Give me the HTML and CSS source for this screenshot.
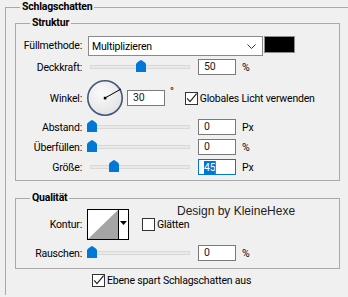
FILE: index.html
```html
<!DOCTYPE html>
<html lang="de">
<head>
<meta charset="utf-8">
<link rel="stylesheet" href="styles.css">
</head>
<body>
<fieldset class="outer">
  <legend>Schlagschatten</legend>

  <fieldset class="group struktur">
    <legend>Struktur</legend>

    <div class="row row-mode">
      <span class="label">Füllmethode:</span>
      <div class="select">
        <span class="select-text">Multiplizieren</span>
        <svg class="chev" width="9" height="5" viewBox="0 0 9 5"><path d="M0.5 0.5 L4.5 4.5 L8.5 0.5" fill="none" stroke="#333" stroke-width="1"/></svg>
      </div>
      <div class="swatch"></div>
    </div>

    <div class="row row-slider row-opacity">
      <span class="label">Deckkraft:</span>
      <div class="slider">
        <div class="track"></div>
        <svg class="thumb" style="left:49px" width="10" height="12" viewBox="0 0 10 12"><path d="M0 12 V4.5 Q0 3.2 1.2 2.4 L4 0.4 Q5 -0.2 6 0.4 L8.8 2.4 Q10 3.2 10 4.5 V12 Z" fill="#0078d7"/></svg>
      </div>
      <div class="num">50</div>
      <span class="unit">%</span>
    </div>

    <div class="row row-angle">
      <span class="label">Winkel:</span>
      <svg class="dial" width="38" height="38" viewBox="0 0 38 38">
        <defs>
          <radialGradient id="dg" cx="0.4" cy="0.35" r="0.7">
            <stop offset="0" stop-color="#fbfbfb"/>
            <stop offset="1" stop-color="#e2e2e2"/>
          </radialGradient>
        </defs>
        <circle cx="19" cy="19" r="17.2" fill="url(#dg)" stroke="#46557a" stroke-width="1.6"/>
        <line x1="19" y1="19" x2="35" y2="10" stroke="#000" stroke-width="1"/>
        <rect x="17.8" y="17.8" width="2.6" height="2.6" fill="#000"/>
      </svg>
      <div class="num num-angle">30</div>
      <span class="unit unit-deg">°</span>
      <div class="check check-global">
        <svg class="box" width="13" height="13" viewBox="0 0 13 13"><rect x="0.5" y="0.5" width="12" height="12" fill="#fff" stroke="#333"/><path d="M2.2 6.4 L5 9.6 L11.6 1.6" fill="none" stroke="#222" stroke-width="1.2"/></svg>
        <span>Globales Licht verwenden</span>
      </div>
    </div>

    <div class="row row-slider row-dist">
      <span class="label">Abstand:</span>
      <div class="slider">
        <div class="track"></div>
        <svg class="thumb" style="left:0px" width="10" height="12" viewBox="0 0 10 12"><path d="M0 12 V4.5 Q0 3.2 1.2 2.4 L4 0.4 Q5 -0.2 6 0.4 L8.8 2.4 Q10 3.2 10 4.5 V12 Z" fill="#0078d7"/></svg>
      </div>
      <div class="num">0</div>
      <span class="unit">Px</span>
    </div>

    <div class="row row-slider row-spread">
      <span class="label">Überfüllen:</span>
      <div class="slider">
        <div class="track"></div>
        <svg class="thumb" style="left:0px" width="10" height="12" viewBox="0 0 10 12"><path d="M0 12 V4.5 Q0 3.2 1.2 2.4 L4 0.4 Q5 -0.2 6 0.4 L8.8 2.4 Q10 3.2 10 4.5 V12 Z" fill="#0078d7"/></svg>
      </div>
      <div class="num">0</div>
      <span class="unit">%</span>
    </div>

    <div class="row row-slider row-size">
      <span class="label">Größe:</span>
      <div class="slider">
        <div class="track"></div>
        <svg class="thumb" style="left:22px" width="10" height="12" viewBox="0 0 10 12"><path d="M0 12 V4.5 Q0 3.2 1.2 2.4 L4 0.4 Q5 -0.2 6 0.4 L8.8 2.4 Q10 3.2 10 4.5 V12 Z" fill="#0078d7"/></svg>
      </div>
      <div class="num num-focus"><span class="sel">45</span><span class="caret"></span></div>
      <span class="unit">Px</span>
    </div>
  </fieldset>

  <fieldset class="group qual">
    <legend>Qualität</legend>

    <div class="row row-contour">
      <span class="label">Kontur:</span>
      <div class="contour">
        <svg class="preview" width="30" height="29" viewBox="0 0 30 29"><rect x="0" y="0" width="30" height="29" fill="#fff"/><path d="M0 29 L30 0 V29 Z" fill="#a5a5a5"/></svg>
        <div class="drop"><svg width="7" height="4" viewBox="0 0 7 4"><path d="M0 0 H7 L3.5 4 Z" fill="#000"/></svg></div>
      </div>
      <div class="check check-smooth">
        <svg class="box" width="13" height="13" viewBox="0 0 13 13"><rect x="0.5" y="0.5" width="12" height="12" fill="#fff" stroke="#333"/></svg>
        <span>Glätten</span>
      </div>
      <span class="watermark">Design by KleineHexe</span>
    </div>

    <div class="row row-slider row-noise">
      <span class="label">Rauschen:</span>
      <div class="slider">
        <div class="track"></div>
        <svg class="thumb" style="left:0px" width="10" height="12" viewBox="0 0 10 12"><path d="M0 12 V4.5 Q0 3.2 1.2 2.4 L4 0.4 Q5 -0.2 6 0.4 L8.8 2.4 Q10 3.2 10 4.5 V12 Z" fill="#0078d7"/></svg>
      </div>
      <div class="num">0</div>
      <span class="unit">%</span>
    </div>
  </fieldset>

  <div class="check check-knockout">
    <svg class="box" width="13" height="13" viewBox="0 0 13 13"><rect x="0.5" y="0.5" width="12" height="12" fill="#fff" stroke="#333"/><path d="M2.2 6.4 L5 9.6 L11.6 1.6" fill="none" stroke="#222" stroke-width="1.2"/></svg>
    <span>Ebene spart Schlagschatten aus</span>
  </div>
</fieldset>
</body>
</html>
```

FILE: styles.css
```css
* { box-sizing: border-box; }
html, body { margin: 0; padding: 0; }
body {
  width: 348px;
  height: 297px;
  overflow: hidden;
  background: #f0f0f0;
  font-family: Roboto, "Liberation Sans", sans-serif;
  font-size: 10.5px;
  letter-spacing: -0.2px;
  color: #000;
}
fieldset {
  border: 1px solid #a9a9a9;
  margin: 0;
  padding: 0;
  min-width: 0;
}
legend {
  padding: 0 2px;
  font-weight: bold;
  font-size: 10.5px;
  line-height: 14px;
  height: 14px;
  margin-left: 14px;
  color: #000;
}
.outer {
  margin-left: 5px;
  width: 343px;
  border-right: 0;
  border-bottom: 0;
  padding-bottom: 8px;
}
.group {
  margin-left: 9px;
  width: 325px;
}
.struktur {
  margin-top: 2px;
  padding-bottom: 5px;
}
.qual {
  margin-top: 10px;
  padding-bottom: 7px;
}
.row {
  display: flex;
  align-items: center;
  position: relative;
}
.label {
  flex: none;
  width: 66px;
  text-align: right;
  white-space: nowrap;
}
.row-mode {
  margin-top: 6px;
  height: 20px;
  align-items: flex-start;
}
.row-mode .label { line-height: 20px; }
.select {
  margin-left: 6px;
  width: 175px;
  height: 20px;
  background: #fff;
  border: 1px solid #8a8a8a;
  display: flex;
  align-items: center;
  justify-content: space-between;
  padding: 0 6px 0 3px;
}
.chev { display: block; }
.swatch {
  margin-left: 1px;
  width: 31px;
  height: 17px;
  background: #000;
  border: 1px solid #8c8c8c;
}
.row-slider { height: 16px; }
.row-opacity { margin-top: 3px; }
.row-dist { margin-top: 2px; }
.row-spread { margin-top: 4px; }
.row-size { margin-top: 4px; }
.slider {
  position: relative;
  margin-left: 5px;
  width: 105px;
  height: 16px;
  flex: none;
}
.track {
  margin-left: 3px;
  margin-top: 6px;
  width: 100px;
  height: 4px;
  background: #e9e9e9;
  border: 1px solid #d8d8d8;
}
.thumb {
  position: absolute;
  top: 1px;
  display: block;
}
.num {
  flex: none;
  margin-left: 6px;
  width: 38px;
  height: 16px;
  background: #fff;
  border: 1px solid #7a7a7a;
  padding-left: 5px;
  line-height: 14px;
  color: #1a1a1a;
  display: flex;
  align-items: center;
}
.unit {
  margin-left: 6px;
  color: #000;
}
.row-angle {
  margin-top: 4px;
  height: 38px;
}
.dial {
  margin-left: 4px;
  display: block;
  flex: none;
}
.num-angle { margin-left: 3px; }
.unit-deg {
  margin-left: 5px;
  align-self: flex-start;
  margin-top: 6px;
}
.check {
  display: flex;
  align-items: center;
  white-space: nowrap;
}
.check .box { display: block; flex: none; }
.check span { margin-left: 2px; }
.check-global { margin-left: 11px; }
.num-focus {
  border-color: #0078d7;
  padding-left: 5px;
}
.sel {
  background: #0078d7;
  color: #fff;
  height: 13px;
  line-height: 13px;
}
.caret {
  width: 1px;
  height: 13px;
  background: #e05a10;
}
.row-contour {
  margin-top: 4px;
  height: 31px;
}
.contour {
  margin-left: 5px;
  width: 42px;
  height: 31px;
  border: 1px solid #000;
  display: flex;
  background: #fff;
}
.preview { display: block; }
.drop {
  width: 10px;
  border-left: 1px solid #000;
  display: flex;
  align-items: center;
  justify-content: center;
}
.drop svg { display: block; margin-top: -3px; }
.check-smooth { margin-left: 13px; }
.watermark {
  position: absolute;
  left: 161px;
  top: -5px;
  font-family: "Liberation Sans", Arial, sans-serif;
  font-size: 12px;
  letter-spacing: 0;
  line-height: 14px;
  color: #222;
  white-space: nowrap;
}
.row-noise { margin-top: 5px; }
.check-knockout {
  margin-top: 5px;
  margin-left: 86px;
}
```
